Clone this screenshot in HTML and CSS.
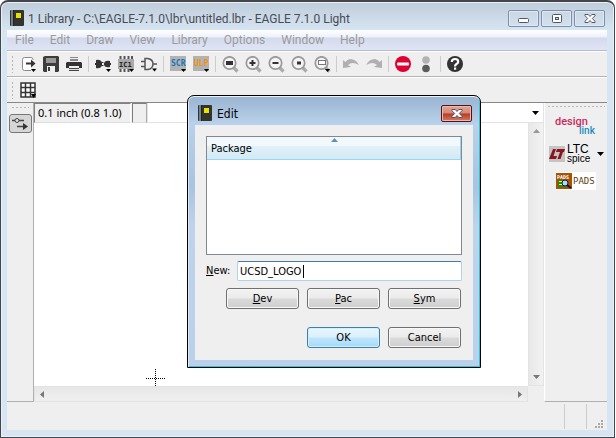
FILE: index.html
```html
<!DOCTYPE html>
<html lang="en">
<head>
<meta charset="utf-8">
<title>1 Library - EAGLE 7.1.0 Light</title>
<link rel="stylesheet" href="styles.css">
</head>
<body>
<svg class="defs" aria-hidden="true">
  <symbol id="book" viewBox="0 0 14 16"><rect width="14" height="16" rx="1" fill="#33342f"/><rect x="1" width="2" height="16" fill="#6f7f8c"/><rect x="3" width="1" height="16" fill="#23231f"/><rect x="6" y="3" width="5" height="5" fill="#e6e200"/></symbol>
  <symbol id="lens" viewBox="0 0 17 17"><path d="M11 11l4.500 4.500" stroke="#aaa" stroke-width="3.200"/><circle cx="7.500" cy="7" r="6.200" fill="#f4f4f4" stroke="#999" stroke-width="1.700"/></symbol>
  <symbol id="cross" viewBox="0 0 12 9"><path d="M1 .5h3.200L6 2.500 7.800.5H11v1.200L8.300 4.500 11 7.300v1.200H7.800L6 6.500 4.200 8.500H1V7.300l2.700-2.800L1 1.700z" fill="#fff" stroke="#50566a"/></symbol>
</svg>
<div class="window">
  <header class="titlebar">
    <svg class="book"><use href="#book"/></svg>
    <h1>1 Library - C:\EAGLE-7.1.0\lbr\untitled.lbr - EAGLE 7.1.0 Light</h1>
    <div class="captions">
      <button aria-label="Minimize"><svg width="12" height="9" viewBox="0 0 12 9"><rect x=".5" y="4.500" width="10" height="4" rx="1" fill="#fff" stroke="#50566a"/></svg></button>
      <button aria-label="Maximize"><svg width="12" height="9" viewBox="0 0 12 9"><rect x="1.500" y=".5" width="9" height="8" rx="1" fill="#fff" stroke="#50566a"/><rect x="4.500" y="3.500" width="3" height="2" fill="#ccd8e6" stroke="#50566a"/></svg></button>
      <button aria-label="Close"><svg width="12" height="9"><use href="#cross"/></svg></button>
    </div>
  </header>
  <div class="client">
    <nav class="menubar">
      <button>File</button><button>Edit</button><button>Draw</button><button>View</button><button>Library</button><button>Options</button><button>Window</button><button>Help</button>
    </nav>
    <div class="toolbar">
      <span class="grip"></span>
      <button aria-label="Open"><svg viewBox="0 0 17 17"><path d="M13 4V3.500q0-2-2-2H4.500q-2 0-2 2v9q0 2 2 2H11" fill="#fff" stroke="#8a8a8a"/><path d="M6 6.500h5V3.500l4.500 4-4.500 4v-3H6z" fill="#333"/><path d="M11 13h5l-2.500 3z"/></svg></button>
      <button aria-label="Save"><svg viewBox="0 0 17 17"><path d="M2 0h13l1 1v14l-1 1H1l-1-1V1z" fill="#3c3c3a"/><rect x="3" y="2" width="10" height="5" fill="#999"/><rect x="4" y="10" width="8" height="6" fill="#eee"/><rect x="5" y="11" width="2" height="4" fill="#3c3c3a"/></svg></button>
      <button aria-label="Print"><svg viewBox="0 0 17 17"><path d="M4 1h8v1H4zM4 3h8v2H4z" fill="#888"/><path d="M1 6h14l1 1v5h-3v-2H3v2H0V7z" fill="#333"/><path d="M3 12h10v3H3z" fill="#ddd"/><path d="M3 12h10v1H3zM3 14h10v1H3z" fill="#444"/></svg></button>
      <span class="sep"></span>
      <button aria-label="Device"><svg viewBox="0 0 17 17"><path d="M0 7h1V4q5-1 6 3v2q-1 4-6 3V9H0zM16 7h-1V5q-5-1-6 2v2q1 3 6 2V9h1z" fill="#333"/><path d="M6 6.500h2.500M6 9.500h2.500" stroke="#333"/><path d="M11 13h5l-2.500 3z"/></svg></button>
      <button aria-label="Package"><svg viewBox="0 0 17 17"><path d="M2.500 0v16M6.500 0v16M10.500 0v16M14 0v11" stroke="#555" stroke-width="2"/><rect y="3" width="16" height="10" fill="#aaa"/><text x="1" y="11" class="chip">IC1</text><path d="M11 13h5l-2.500 3z"/></svg></button>
      <button aria-label="Symbol"><svg viewBox="0 0 17 17"><path d="M4 2.500h3q5 1 5 5.500t-5 5.500H4zM0 5.500h4M0 10.500h4M12 8h4" fill="none" stroke="#555" stroke-width="1.500"/><path d="M11 12.500h5l-2.500 3z"/></svg></button>
      <span class="sep"></span>
      <button aria-label="Script"><svg viewBox="0 0 17 17"><rect width="16" height="15" fill="#b2b2b2"/><text x="1" y="10" class="scr">SCR</text><path d="M11 13h5l-2.500 3z"/></svg></button>
      <button aria-label="ULP"><svg viewBox="0 0 17 17"><rect width="16" height="15" fill="#b2b2b2"/><text x="1" y="10" class="ulp">ULP</text><path d="M11 13h5l-2.500 3z"/></svg></button>
      <span class="sep"></span>
      <button aria-label="Fit"><svg viewBox="0 0 17 17"><use href="#lens"/><rect x="4" y="5" width="7" height="4" fill="#333"/></svg></button>
      <button aria-label="Zoom in"><svg viewBox="0 0 17 17"><use href="#lens"/><path d="M4.500 7h6M7.500 4v6" stroke="#333" stroke-width="2"/></svg></button>
      <button aria-label="Zoom out"><svg viewBox="0 0 17 17"><use href="#lens"/><path d="M4.500 7h6" stroke="#333" stroke-width="2"/></svg></button>
      <button aria-label="Redraw"><svg viewBox="0 0 17 17"><use href="#lens"/><path d="M6 7h4" stroke="#333" stroke-width="3"/></svg></button>
      <button aria-label="Select"><svg viewBox="0 0 17 17"><use href="#lens"/><rect x="4.500" y="4.500" width="7" height="4" fill="#fff" stroke="#777"/><path d="M11 13h5l-2.500 3z"/></svg></button>
      <span class="sep"></span>
      <button aria-label="Undo"><svg viewBox="0 0 17 17"><path d="M0 4v8l8-1-3-2q4-4 11 0-3-6-9-6-3 .5-4.500 3z" fill="#b0b0b0"/></svg></button>
      <button aria-label="Redo"><svg viewBox="0 0 17 17"><path d="M16 4v8l-8-1 3-2Q7 5 0 9q3-6 9-6 3 .5 4.500 3z" fill="#b0b0b0"/></svg></button>
      <span class="sep"></span>
      <button aria-label="Stop"><svg viewBox="0 0 17 17"><circle cx="8" cy="8" r="8" fill="#df0031"/><rect x="2" y="6.500" width="12" height="3" rx="1" fill="#fff"/></svg></button>
      <button aria-label="Go"><svg viewBox="0 0 17 17"><circle cx="8" cy="4" r="3.800" fill="#b2b2b2"/><circle cx="8" cy="12.500" r="3.800" fill="#5c5c5c"/></svg></button>
      <span class="sep"></span>
      <button aria-label="Help"><svg viewBox="0 0 17 17"><circle cx="8" cy="8" r="8" fill="#333"/><path d="M4.800 6q0-3 3.200-3t3.200 2.700Q11.200 7 9.500 8 8 8.900 8 10.500" fill="none" stroke="#fff" stroke-width="2.200"/><rect x="7" y="11.500" width="2.200" height="2.200" fill="#fff"/></svg></button>
    </div>
    <div class="toolbar second">
      <span class="grip"></span>
      <button aria-label="Grid"><svg viewBox="0 0 17 17"><path d="M1 1h14v14H1zM5.500 1v14M10.500 1v14M1 5.500h14M1 10.500h14" fill="#fff" stroke="#333" stroke-width="1.500"/><path d="M11 12h5l-2.500 4z"/></svg></button>
    </div>
    <main class="work">
      <aside class="left">
        <span class="hgrip"></span>
        <button aria-label="Show options"><svg width="17" height="13" viewBox="0 0 17 13"><path d="M0 3.500h12M5 9.500h7" stroke="#444" stroke-width="1.500"/><circle cx="5" cy="3.500" r="2" fill="#ddd" stroke="#444"/><path d="M11 6l5 3.500-5 3.500z" fill="#333"/></svg></button>
      </aside>
      <section class="center">
        <div class="command">
          <output class="coords">0.1 inch (0.8 1.0)</output><span class="pad"></span>
          <div class="combo"><input aria-label="Command"><svg width="7" height="4" viewBox="0 0 7 4"><path d="M0 0h7L3.500 4z"/></svg></div>
        </div>
        <div class="view">
          <div class="canvas"><svg class="origin" width="20" height="17" viewBox="0 0 20 17"><path d="M0 9.500h20M9.500 0v17" stroke="#000" stroke-dasharray="1 1"/></svg></div>
          <div class="vscroll"><svg width="7" height="4" viewBox="0 0 7 4"><path d="M0 4h7L3.500 0z" fill="#999"/></svg><svg width="7" height="4" viewBox="0 0 7 4"><path d="M0 0h7L3.500 4z" fill="#777"/></svg></div>
          <div class="hscroll"><svg width="4" height="7" viewBox="0 0 4 7"><path d="M4 0v7L0 3.500z" fill="#777"/></svg><svg width="4" height="7" viewBox="0 0 4 7"><path d="M0 0v7l4-3.500z" fill="#777"/></svg></div>
          <div class="corner"></div>
        </div>
      </section>
      <aside class="right">
        <span class="hgrip"></span>
        <button class="design"><span class="red">design</span><span class="blue">link</span></button>
        <button class="ltc"><svg width="16" height="16" viewBox="0 0 16 16"><rect width="16" height="16" fill="#c4c4c4"/><path d="M4 3h3L4.500 10H8l-1 3H0zM8 3h8l-1 3h-1l-2.500 7h-3L11 6H7z" fill="#8c1420"/></svg><span class="ltc-text"><span>LTC</span><small>spice</small></span><svg width="7" height="4" viewBox="0 0 7 4"><path d="M0 0h7L3.500 4z"/></svg></button>
        <button class="pads"><svg width="16" height="16" viewBox="0 0 16 16"><rect width="16" height="16" fill="#a65208"/><text x="1" y="6" class="pt">PADS</text><rect x="2" y="7" width="9" height="7" fill="#29851e"/><path d="M3 8.500h3M3 11.500h3" stroke="#ff4"/><circle cx="9" cy="10" r="3" fill="#a9dcf5" stroke="#123"/><path d="M11 12l4 3" stroke="#114" stroke-width="2"/></svg><span>PADS</span></button>
      </aside>
    </main>
    <footer class="status"><i></i><i></i><svg width="9" height="9" viewBox="0 0 9 9"><path d="M6 1h2M3 4h2M6 4h2M0 7h2M3 7h2M6 7h2" stroke="#aaa" stroke-width="2"/></svg></footer>
  </div>
</div>
<form class="dialog" role="dialog" aria-labelledby="edit-title">
  <header class="dialog-title">
    <svg class="book"><use href="#book"/></svg>
    <h2 id="edit-title">Edit</h2>
    <button type="button" class="close" aria-label="Close"><svg width="12" height="9"><use href="#cross"/></svg></button>
  </header>
  <div class="dialog-body">
    <div class="list"><table><thead><tr><th>Package<svg class="sort" width="7" height="4" viewBox="0 0 7 4"><path d="M0 4l3.500-4L7 4z" fill="#5a93b4"/></svg></th></tr></thead></table></div>
    <div class="field"><label for="name"><u>N</u>ew:</label><input id="name" value="UCSD_LOGO"><span class="caret"></span></div>
    <div class="row"><button type="button"><u>D</u>ev</button><button type="button"><u>P</u>ac</button><button type="button"><u>S</u>ym</button></div>
    <div class="row actions"><button type="button" class="ok">OK</button><button type="button">Cancel</button></div>
  </div>
</form>
</body>
</html>
```
FILE: styles.css
```css
* { box-sizing: border-box; }
html, body { height: 100%; }
body { margin: 0; background: #fff; font: 11px/16px "DejaVu Sans Condensed", "DejaVu Sans", sans-serif; color: #000; overflow: hidden; }
button, input { font: inherit; color: inherit; margin: 0; padding: 0; border: 0; background: none; }
svg { display: block; flex: none; }
.defs { position: absolute; width: 0; height: 0; }
h1, h2 { margin: 0; font-weight: 400; font-size: 12px; }

.window { position: relative; display: flex; flex-direction: column; height: 100%; margin-right: 1px; padding: 0 7px 7px 6px; border: 1px solid #454549; border-top-width: 2px; border-radius: 8px 8px 0 0; background: linear-gradient(#bfcddb 0, #d7e4f2 28px); box-shadow: inset 0 0 0 1px #e8f1fa; }
.titlebar { display: flex; align-items: center; height: 28px; padding: 4px 2px 0 3px; flex: none; }
.book { width: 14px; height: 16px; }
.titlebar h1 { flex: 1; margin-left: 4px; padding-top: 2px; color: #474c55; white-space: nowrap; }
.captions { display: flex; gap: 2px; }
.captions button { display: grid; place-items: center; width: 31px; height: 17px; border: 1px solid #7d8fad; border-radius: 2px; background: linear-gradient(#c9d6e4, #d3e0ee); box-shadow: inset 0 0 0 1px #dfe9f3; }
.client { display: flex; flex-direction: column; flex: 1; min-height: 0; background: #efefef; }

.menubar { display: flex; gap: 16px; height: 21px; padding-left: 8px; flex: none; background: linear-gradient(#fff 0, #eef1fa 7px, #d4daec 8px, #e0e5f6 100%); border-bottom: 1px solid #b6bccc; color: #9b9b9b; font-size: 12px; }
.titlebar h1, .menubar { font-family: Roboto, sans-serif; }
.toolbar { display: flex; align-items: center; height: 26px; padding: 1px 0 1px 4px; flex: none; border-top: 1px solid #fff; border-bottom: 1px solid #b4b4b4; }
.toolbar.second { border-bottom-color: #888; }
.toolbar button { width: 23px; height: 23px; display: grid; place-items: center; }
.toolbar button svg { width: 17px; height: 17px; overflow: visible; }
.sep { width: 1px; height: 16px; margin: 0 3px 0 2px; background: #ccc; }
.grip { width: 3px; height: 18px; margin-right: 3px; background: radial-gradient(circle, #b4b4b4 1px, transparent 1px) 0 0 / 3px 4px; }
.chip { font: bold 7px "DejaVu Sans Mono", monospace; fill: #222; }
.scr, .ulp { font: bold 8px "DejaVu Sans Mono", monospace; fill: #1277be; }
.ulp { fill: #ef920d; }

.work { display: flex; flex: 1; min-height: 0; }
.left { width: 27px; padding: 3px 2px; border-right: 1px solid #b0b0b0; border-bottom: 1px solid #b0b0b0; }
.hgrip { display: block; height: 3px; margin: 0 2px; background: radial-gradient(circle, #b8b8b8 1px, transparent 1px) 0 0 / 4px 3px; }
.left button { display: grid; place-items: center; width: 23px; height: 19px; margin-top: 5px; border: 1px solid #777; border-radius: 3px; background: #d6d6d6; }
.center { display: flex; flex-direction: column; flex: 1; min-width: 0; }
.command { display: flex; height: 20px; flex: none; }
.coords, .pad { border: 1px solid #808080; border-right-color: #fff; border-bottom-color: #ddd; }
.coords { width: 97px; padding: 1px 0 0 3px; white-space: nowrap; font-family: "Noto Sans", sans-serif; }
.pad { width: 15px; margin-left: 1px; border-right-color: #aaa; }
.combo { display: flex; align-items: center; flex: 1; padding-right: 4px; background: #fff; border: 1px solid #e2e3ea; border-top: 0; }
.combo input { flex: 1; min-width: 0; outline: 0; }
.view { display: grid; grid-template: 1fr 16px / 1fr 16px; flex: 1; min-height: 0; }
.canvas { display: flex; align-items: flex-end; padding-left: 112px; background: #fff; }
.vscroll, .hscroll { display: flex; align-items: center; justify-content: space-between; background: #eee; border: 1px solid #e3e3e3; }
.vscroll { flex-direction: column; padding: 6px 0; background: linear-gradient(90deg, #e8e8e8, #f2f2f2); border-top: 0; }
.hscroll { padding: 0 5px; background: linear-gradient(#e6e6e6, #f0f0f0); }
.right { display: flex; flex-direction: column; width: 63px; padding: 2px 0; border-left: 1px solid #fff; border-bottom: 1px solid #b0b0b0; }
.right button { align-self: flex-start; }
.design { display: flex; flex-direction: column; margin: 9px 0 0 10px; padding-bottom: 1px; font-family: Roboto, sans-serif; font-weight: 500; line-height: 9px; text-align: left; }
.red { color: #c92a5d; font-size: 11px; }
.blue { padding-left: 24px; color: #208dbd; font-size: 10px; }
.ltc { display: flex; align-items: center; gap: 2px; margin: 9px 0 0 4px; font-family: "Liberation Sans", sans-serif; text-align: left; }
.ltc-text { display: flex; flex-direction: column; width: 28px; font-size: 12px; line-height: 9px; }
.ltc-text small { font-size: 10px; }
.pads { display: flex; align-items: center; gap: 1px; height: 18px; margin: 9px 0 0 11px; padding-right: 1px; background: #fff; color: #63400d; font: 9px "DejaVu Sans Mono", monospace; }
.pt { font: bold 5px "DejaVu Sans Mono", monospace; fill: #fff; }
.status { display: flex; justify-content: flex-end; height: 28px; padding: 2px 3px 1px 0; flex: none; }
.status i { width: 22px; border-left: 1px solid #ccc; }
.status i + i { width: 9px; }
.status svg { align-self: flex-end; }

.dialog { position: absolute; left: 187px; top: 95px; width: 294px; padding: 0 7px 7px; border: 1px solid #000; border-radius: 7px 7px 0 0; background: linear-gradient(#99b4d1 0, #b9d1ea 28px, #a8c4e0 90px, #bfd3ea 130px, #b9d1ea 100%); box-shadow: inset 0 1px #e6f3fc, inset 1px 0 #dcebf8, inset -1px -1px #28c8dc; }
.dialog-title { display: flex; align-items: center; height: 29px; padding: 7px 1px 2px 3px; }
.dialog h2 { flex: 1; margin-left: 5px; padding-top: 2px; }
.close { display: grid; place-items: center; width: 31px; height: 17px; border: 1px solid #4d1520; border-radius: 2px; background: linear-gradient(#e3a797, #d68573 48%, #b63b24 52%, #d57b63); box-shadow: inset 0 0 0 1px #efb8aa; }
.dialog-body { padding: 11px 11px 12px; background: #efefef; }
.list { height: 119px; border: 1px solid #838790; background: #fff; }
.list table { width: 100%; border-collapse: collapse; }
.list th { position: relative; height: 22px; padding: 4px 4px 1px; text-align: left; font-weight: 400; background: linear-gradient(#f2f9fd 0, #f2f9fd 9px, #e1f0f8 9px, #d5eaf4 100%); border-right: 1px solid #93d7f9; border-bottom: 1px solid #93d7f9; }
.sort { position: absolute; left: 50%; top: 1px; margin-left: -3px; }
.field { position: relative; display: flex; margin-top: 6px; }
.field label { width: 31px; line-height: 20px; }
.field input { flex: 1; min-width: 0; height: 20px; padding-left: 2px; border: 1px solid #b0d2ee; border-top-color: #3d7bad; border-radius: 2px; background: #fff; outline: 0; }
.caret { position: absolute; left: 97px; top: 4px; width: 1px; height: 13px; background: #000; }
.row { display: flex; justify-content: flex-end; gap: 8px; margin-top: 7px; padding-right: 1px; }
.row.actions { margin-top: 18px; }
.row button { width: 73px; height: 21px; border: 1px solid #707070; border-radius: 3px; background: linear-gradient(#f2f2f2, #ebebeb 48%, #dadada 52%, #cfcfcf); box-shadow: inset 0 0 0 1px #f8f8f8; }
.row .ok { border-color: #3c7fb1; background: linear-gradient(#eaf6fd, #d9f0fc 48%, #bee6fd 52%, #a7d9f5); box-shadow: inset 0 0 0 1px #d0f0fc; }
```
